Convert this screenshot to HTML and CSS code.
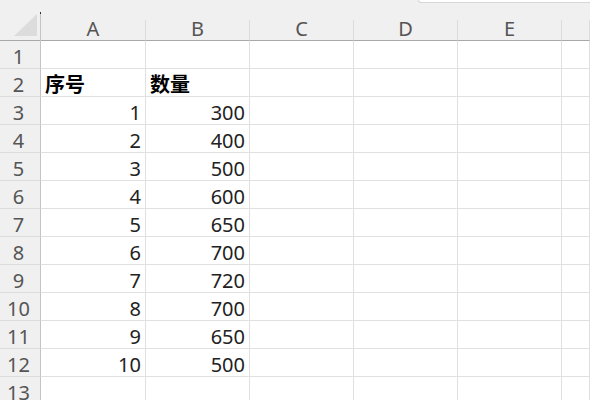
FILE: index.html
```html
<!DOCTYPE html>
<html lang="zh-CN">

<head>
    <meta charset="UTF-8">
    <title>Sheet1</title>
    <link rel="stylesheet" href="styles.css">
</head>

<body>
    <div class="sheet">
        <!-- corner select-all box -->
        <div class="corner">
            <svg width="41" height="41" viewBox="0 0 41 41">
                <polygon points="14,36 37,36 37,14" fill="#dcdcdc" />
                <rect x="40" y="13" width="1" height="28" fill="#c4c4c4" />
                <rect x="40" y="12" width="1" height="2" fill="#333" />
            </svg>
        </div>
        <div class="band">
            <div class="tab"></div>
        </div>

        <!-- column headers -->
        <div class="col-head">A</div>
        <div class="col-head">B</div>
        <div class="col-head">C</div>
        <div class="col-head">D</div>
        <div class="col-head">E</div>
        <div class="col-head"></div>

        <div class="row-head">1</div>
        <div class="cell"></div><div class="cell"></div><div class="cell"></div><div class="cell"></div><div class="cell"></div><div class="cell"></div>

        <div class="row-head">2</div>
        <div class="cell title">序号</div><div class="cell title">数量</div><div class="cell"></div><div class="cell"></div><div class="cell"></div><div class="cell"></div>

        <div class="row-head">3</div>
        <div class="cell num">1</div><div class="cell num">300</div><div class="cell"></div><div class="cell"></div><div class="cell"></div><div class="cell"></div>

        <div class="row-head">4</div>
        <div class="cell num">2</div><div class="cell num">400</div><div class="cell"></div><div class="cell"></div><div class="cell"></div><div class="cell"></div>

        <div class="row-head">5</div>
        <div class="cell num">3</div><div class="cell num">500</div><div class="cell"></div><div class="cell"></div><div class="cell"></div><div class="cell"></div>

        <div class="row-head">6</div>
        <div class="cell num">4</div><div class="cell num">600</div><div class="cell"></div><div class="cell"></div><div class="cell"></div><div class="cell"></div>

        <div class="row-head">7</div>
        <div class="cell num">5</div><div class="cell num">650</div><div class="cell"></div><div class="cell"></div><div class="cell"></div><div class="cell"></div>

        <div class="row-head">8</div>
        <div class="cell num">6</div><div class="cell num">700</div><div class="cell"></div><div class="cell"></div><div class="cell"></div><div class="cell"></div>

        <div class="row-head">9</div>
        <div class="cell num">7</div><div class="cell num">720</div><div class="cell"></div><div class="cell"></div><div class="cell"></div><div class="cell"></div>

        <div class="row-head">10</div>
        <div class="cell num">8</div><div class="cell num">700</div><div class="cell"></div><div class="cell"></div><div class="cell"></div><div class="cell"></div>

        <div class="row-head">11</div>
        <div class="cell num">9</div><div class="cell num">650</div><div class="cell"></div><div class="cell"></div><div class="cell"></div><div class="cell"></div>

        <div class="row-head">12</div>
        <div class="cell num">10</div><div class="cell num">500</div><div class="cell"></div><div class="cell"></div><div class="cell"></div><div class="cell"></div>

        <div class="row-head">13</div>
        <div class="cell"></div><div class="cell"></div><div class="cell"></div><div class="cell"></div><div class="cell"></div><div class="cell"></div>
    </div>
</body>

</html>
```

FILE: styles.css
```css
* {
    margin: 0;
    padding: 0;
    box-sizing: border-box;
}

body {
    background: #f0f0f0;
    font-family: 'Noto Sans', 'Noto Sans CJK SC', sans-serif;
    overflow: hidden;
}

.sheet {
    width: 590px;
    height: 400px;
    overflow: hidden;
    display: grid;
    grid-template-columns: 41px 105px repeat(4, 104px) 1fr;
    grid-template-rows: 20px 21px repeat(13, 28px);
}

.corner {
    grid-row: 1 / span 2;
    border-bottom: 1px solid #a8a8a8;
}

.corner svg {
    display: block;
}

.band {
    grid-column: 2 / -1;
    display: flex;
    justify-content: flex-end;
}

.tab {
    width: 172px;
    height: 3px;
    background: #fff;
    border-bottom: 1px solid #d6d6d6;
    border-left: 1px solid #d6d6d6;
    border-bottom-left-radius: 6px;
}

.col-head {
    border-right: 1px solid #dcdcdc;
    border-bottom: 1px solid #a8a8a8;
    color: #555;
    font-size: 20px;
    line-height: 17px;
    text-align: center;
    overflow: visible;
}

.row-head {
    border-right: 1px solid #c4c4c4;
    border-bottom: 1px solid #dcdcdc;
    color: #555;
    font-size: 20px;
    line-height: 31px;
    text-align: center;
    padding-right: 3px;
}

.cell {
    background: #fff;
    border-right: 1px solid #e0e0e0;
    border-bottom: 1px solid #e0e0e0;
    font-size: 20px;
    line-height: 31px;
    color: #222;
    white-space: nowrap;
}

.cell.num {
    text-align: right;
    padding-right: 4px;
}

.cell.title {
    font-weight: bold;
    padding-left: 4px;
    color: #000;
}
```
